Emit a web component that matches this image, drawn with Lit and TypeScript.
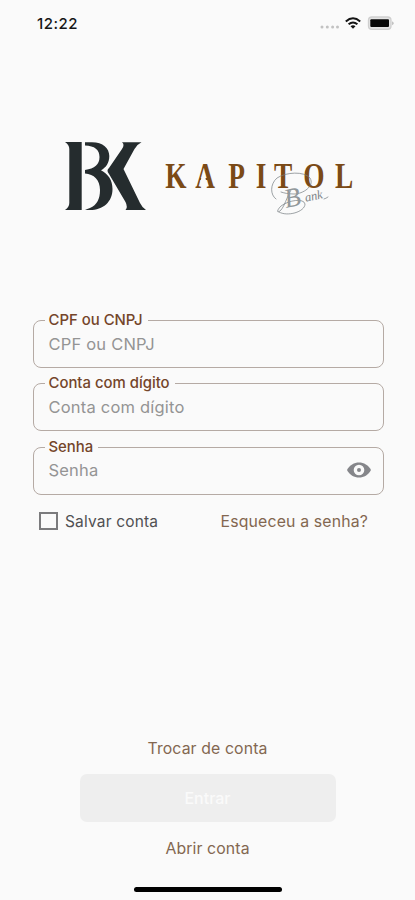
import { LitElement, html, css, svg, nothing } from "lit";
import { customElement, property } from "lit/decorators.js";

@customElement("status-bar")
class StatusBar extends LitElement {
  static styles = css`
    :host { display: flex; justify-content: space-between; align-items: center; height: 46px; padding: 0 20px 0 37px; box-sizing: border-box; }
    .time { font-size: 15px; font-weight: 500; letter-spacing: 0.5px; color: #161616; }
    svg { display: block; }
  `;
  render() {
    return html`<span class="time">12:22</span>
      <svg width="76" height="18" viewBox="319 14 76 18">
        <g fill="#c2c2c2">${[322, 327.3, 332.6, 337.5].map((x) => svg`<circle cx=${x} cy="27" r="1.5"/>`)}</g>
        <g fill="none" stroke="#141414" stroke-width="2">
          <path d="M345.8 21.4Q353 15.2 360.2 21.4"/>
          <path d="M348.6 24.3Q353 20.6 357.4 24.3"/>
        </g>
        <path d="M350.5 26.3Q353 24.3 355.5 26.3L353 28.8Z" fill="#141414"/>
        <rect x="368.5" y="17" width="22.5" height="12.4" rx="3.4" fill="#e4e4e4" stroke="#cfcfcf" stroke-width="1.3"/>
        <rect x="370.3" y="19.3" width="18.7" height="7.8" rx="1" fill="#080808"/>
        <path d="M392.3 21.2q2.6 2 0 4z" fill="#aaa"/>
      </svg>`;
  }
}

@customElement("brand-logo")
class BrandLogo extends LitElement {
  static styles = css`
    :host { display: block; }
    svg { display: block; }
    .word { font: bold 35.5px "Liberation Serif", serif; fill: #7b4a16; }
    .script { font: italic 12.5px "Liberation Serif", serif; fill: #7b8286; }
    .initial { font-size: 27px; fill: #92989b; }
  `;
  render() {
    return html`<svg width="300" height="84" viewBox="60 136 300 84">
      <g fill="#252c2e">
        <path d="M65 142H81.700V210H65Q69.300 207 69.300 203V149Q69.300 145 65 142Z"/>
        <path d="M85 142.200H92C103 142.200 109.300 148 109.300 156C109.300 163 106 167.500 101 170.300C108 174 112.500 180 112.500 189C112.500 202 103 210 90 210H85Q87 209 90 208C97 205 100 199 100 190C100 180 94 174 85 173.500V170Q99.500 168 99.500 157Q99.500 146 85 145.500Z"/>
        <path d="M122 142.200H141.500Q137.500 144 134.500 149L123.500 169L140 203Q142.500 208 146 210H125.500Q128 207 125.500 202L109 174Q106 170.500 109 168L122 149Q125 144.500 122 142.200Z" stroke="#fafafa" stroke-width="1.600" paint-order="stroke"/>
      </g>
      <g transform="scale(0.77 1)">
        <text class="word" y="187.6" x="214.5 253.5 296.5 332 356 394 435">KAPITOL</text>
      </g>
      <path d="M201.400 177.500h4l.9 4.500h-6z" fill="#fafafa"/>
      <g fill="none" stroke="#747b80" stroke-width=".7" stroke-linecap="round">
        <path d="M276 199C270 195 270 184 277 178C286 172 304 171 310 178C315 186 303 194 294 194C288 194 284 193 281 192"/>
        <path d="M291 190C286 199 285 205 281 210C277 214 276 211 281 206C289 200 304 198 305 204C305 212 287 217 279 212"/>
        <path d="M324 199Q326 198.500 328 197"/>
      </g>
      <text class="script" transform="translate(286 208) rotate(-12)"><tspan class="initial">B</tspan><tspan dx="4" dy="-2">ank</tspan></text>
    </svg>`;
  }
}

@customElement("outlined-field")
class OutlinedField extends LitElement {
  @property() label = "";
  @property({ type: Boolean }) secret = false;
  static styles = css`
    :host { display: flex; position: relative; box-sizing: border-box; height: 48px; padding: 0 11px 1px 15px; align-items: center; justify-content: space-between; border: 1px solid #b5aaa4; border-radius: 8px; }
    .label { position: absolute; left: 11px; top: -10px; height: 18px; line-height: 19px; padding: 0 5px 0 4px; background: #fafafa; color: #74452a; font-size: 14.9px; font-weight: 500; white-space: nowrap; }
    .hint { color: #949494; font-size: 16.5px; letter-spacing: .2px; }
    svg { display: block; }
  `;
  render() {
    return html`<span class="label">${this.label}</span><span class="hint">${this.label}</span>
      ${this.secret
        ? html`<svg width="26" height="18" viewBox="0 0 26 18">
            <path d="M1 9C6 -1 20 -1 25 9C20 19 6 19 1 9Z" fill="#85868a"/>
            <circle cx="13" cy="9" r="5.3" fill="#fafafa"/><circle cx="13" cy="9" r="2" fill="#85868a"/>
          </svg>`
        : nothing}`;
  }
}

@customElement("app-root")
class AppRoot extends LitElement {
  static styles = css`
    :host { display: flex; flex-direction: column; box-sizing: border-box; height: 900px; width: 100%; background: #fafafa; font-family: Inter, sans-serif; overflow: hidden; }
    brand-logo { margin: 90px 0 0 60px; }
    .form { display: flex; flex-direction: column; gap: 15.3px; margin: 100px 31.5px 0 32.5px; }
    .options { display: flex; justify-content: space-between; align-items: center; margin: 16.5px 47px 0 39px; height: 20px; }
    .save { display: flex; align-items: center; gap: 7px; color: #505052; font-size: 15.5px; letter-spacing: .17px; }
    .box { box-sizing: border-box; width: 19px; height: 18px; border: 2px solid #7b7b7d; }
    .link { color: #836750; font-size: 15.8px; letter-spacing: .12px; }
    .forgot { letter-spacing: .17px; }
    .footer { display: flex; flex-direction: column; align-items: center; margin-top: auto; height: 161px; }
    .footer .link { height: 20px; line-height: 20px; }
    .enter { display: flex; align-items: center; justify-content: center; width: 256px; height: 48px; margin: 15px 0 17px; border-radius: 7px; background: #eee; color: #fafafa; font-size: 16px; font-weight: 500; }
    .home { width: 148px; height: 5px; border-radius: 3px; background: #000; margin-top: 28px; }
  `;
  render() {
    return html`<status-bar></status-bar>
      <brand-logo></brand-logo>
      <div class="form">
        <outlined-field label="CPF ou CNPJ"></outlined-field>
        <outlined-field label="Conta com dígito"></outlined-field>
        <outlined-field label="Senha" secret></outlined-field>
      </div>
      <div class="options">
        <span class="save"><span class="box"></span>Salvar conta</span>
        <span class="link forgot">Esqueceu a senha?</span>
      </div>
      <div class="footer">
        <span class="link">Trocar de conta</span>
        <div class="enter">Entrar</div>
        <span class="link">Abrir conta</span>
        <div class="home"></div>
      </div>`;
  }
}
